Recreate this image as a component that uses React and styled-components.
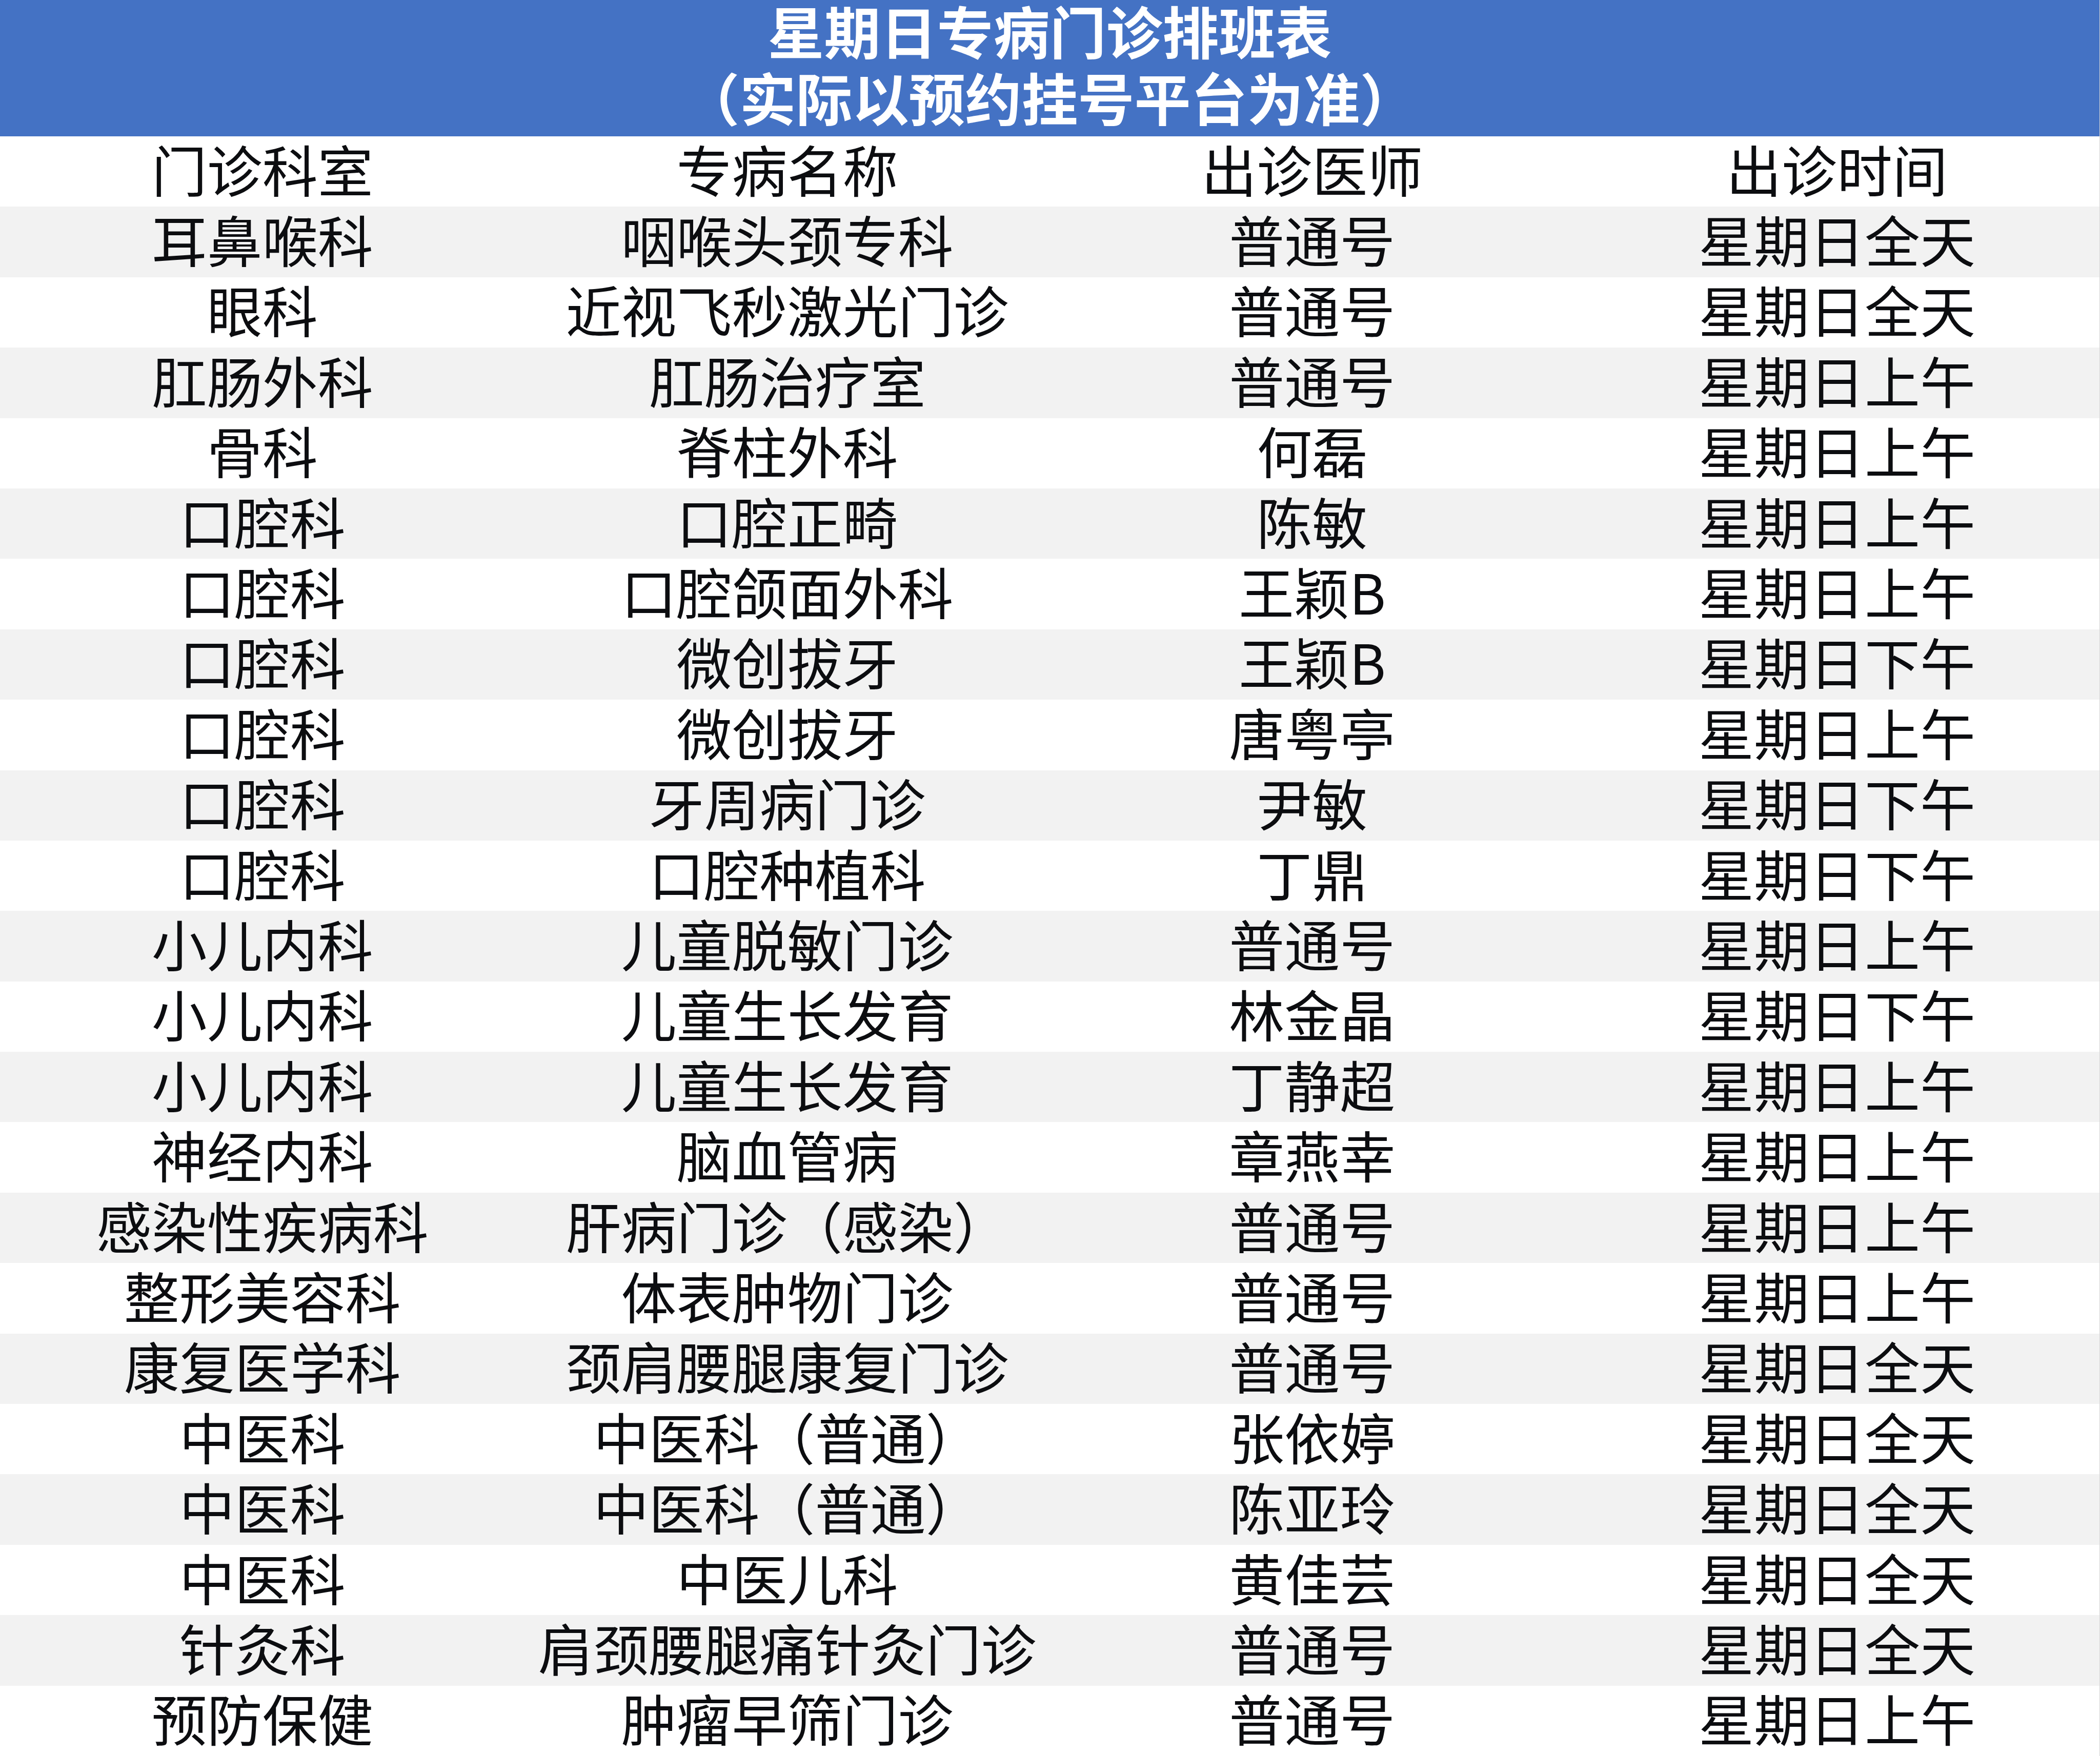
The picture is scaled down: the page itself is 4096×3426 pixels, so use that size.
import React from 'react'
import styled, { createGlobalStyle } from 'styled-components'

const rows = [
  ['耳鼻喉科', '咽喉头颈专科', '普通号', '星期日全天'],
  ['眼科', '近视飞秒激光门诊', '普通号', '星期日全天'],
  ['肛肠外科', '肛肠治疗室', '普通号', '星期日上午'],
  ['骨科', '脊柱外科', '何磊', '星期日上午'],
  ['口腔科', '口腔正畸', '陈敏', '星期日上午'],
  ['口腔科', '口腔颌面外科', '王颖B', '星期日上午'],
  ['口腔科', '微创拔牙', '王颖B', '星期日下午'],
  ['口腔科', '微创拔牙', '唐粤亭', '星期日上午'],
  ['口腔科', '牙周病门诊', '尹敏', '星期日下午'],
  ['口腔科', '口腔种植科', '丁鼎', '星期日下午'],
  ['小儿内科', '儿童脱敏门诊', '普通号', '星期日上午'],
  ['小儿内科', '儿童生长发育', '林金晶', '星期日下午'],
  ['小儿内科', '儿童生长发育', '丁静超', '星期日上午'],
  ['神经内科', '脑血管病', '章燕幸', '星期日上午'],
  ['感染性疾病科', '肝病门诊（感染）', '普通号', '星期日上午'],
  ['整形美容科', '体表肿物门诊', '普通号', '星期日上午'],
  ['康复医学科', '颈肩腰腿康复门诊', '普通号', '星期日全天'],
  ['中医科', '中医科（普通）', '张依婷', '星期日全天'],
  ['中医科', '中医科（普通）', '陈亚玲', '星期日全天'],
  ['中医科', '中医儿科', '黄佳芸', '星期日全天'],
  ['针灸科', '肩颈腰腿痛针灸门诊', '普通号', '星期日全天'],
  ['预防保健', '肿瘤早筛门诊', '普通号', '星期日上午'],
]

const columns = ['门诊科室', '专病名称', '出诊医师', '出诊时间']

export default function App() {
  return (
    <>
      <GlobalStyle />
      <Page>
        <Banner>
          <TitleLine>星期日专病门诊排班表</TitleLine>
          <TitleLine>（实际以预约挂号平台为准）</TitleLine>
        </Banner>
        <Table>
          <Row>
            {columns.map(c => <Cell key={c}>{c}</Cell>)}
          </Row>
          {rows.map((r, i) => (
            <Row key={i} $shaded={i % 2 === 0}>
              {r.map((v, j) => <Cell key={j}>{v}</Cell>)}
            </Row>
          ))}
        </Table>
      </Page>
    </>
  )
}

const GlobalStyle = createGlobalStyle`
  html, body {
    margin: 0;
    padding: 0;
    background: #ffffff;
  }
  body {
    font-family: "Noto Sans CJK SC", "Noto Sans", sans-serif;
  }
`;

const Page = styled.div`
  width: 4096px;
  height: 3426px;
  display: flex;
  flex-direction: column;
  box-sizing: border-box;
  border-right: 1px solid #d4d4d4;
`;

const Banner = styled.div`
  height: 266px;
  box-sizing: border-box;
  padding-bottom: 20px;
  background: #4472c4;
  display: flex;
  flex-direction: column;
  align-items: center;
  justify-content: center;
  color: #ffffff;
`;

const TitleLine = styled.div`
  font-size: 110px;
  font-weight: 700;
  line-height: 130px;
  white-space: nowrap;
`;

const Table = styled.div`
  display: grid;
  grid-auto-rows: 137.4px;
`;

const Row = styled.div`
  display: grid;
  grid-template-columns: repeat(4, 1fr);
  align-items: center;
  background: ${p => (p.$shaded ? '#f2f2f2' : '#ffffff')};
`;

const Cell = styled.div`
  text-align: center;
  font-size: 108px;
  font-weight: 400;
  line-height: 1;
  color: #0c0d10;
  white-space: nowrap;
  padding-bottom: 14px;
`;
